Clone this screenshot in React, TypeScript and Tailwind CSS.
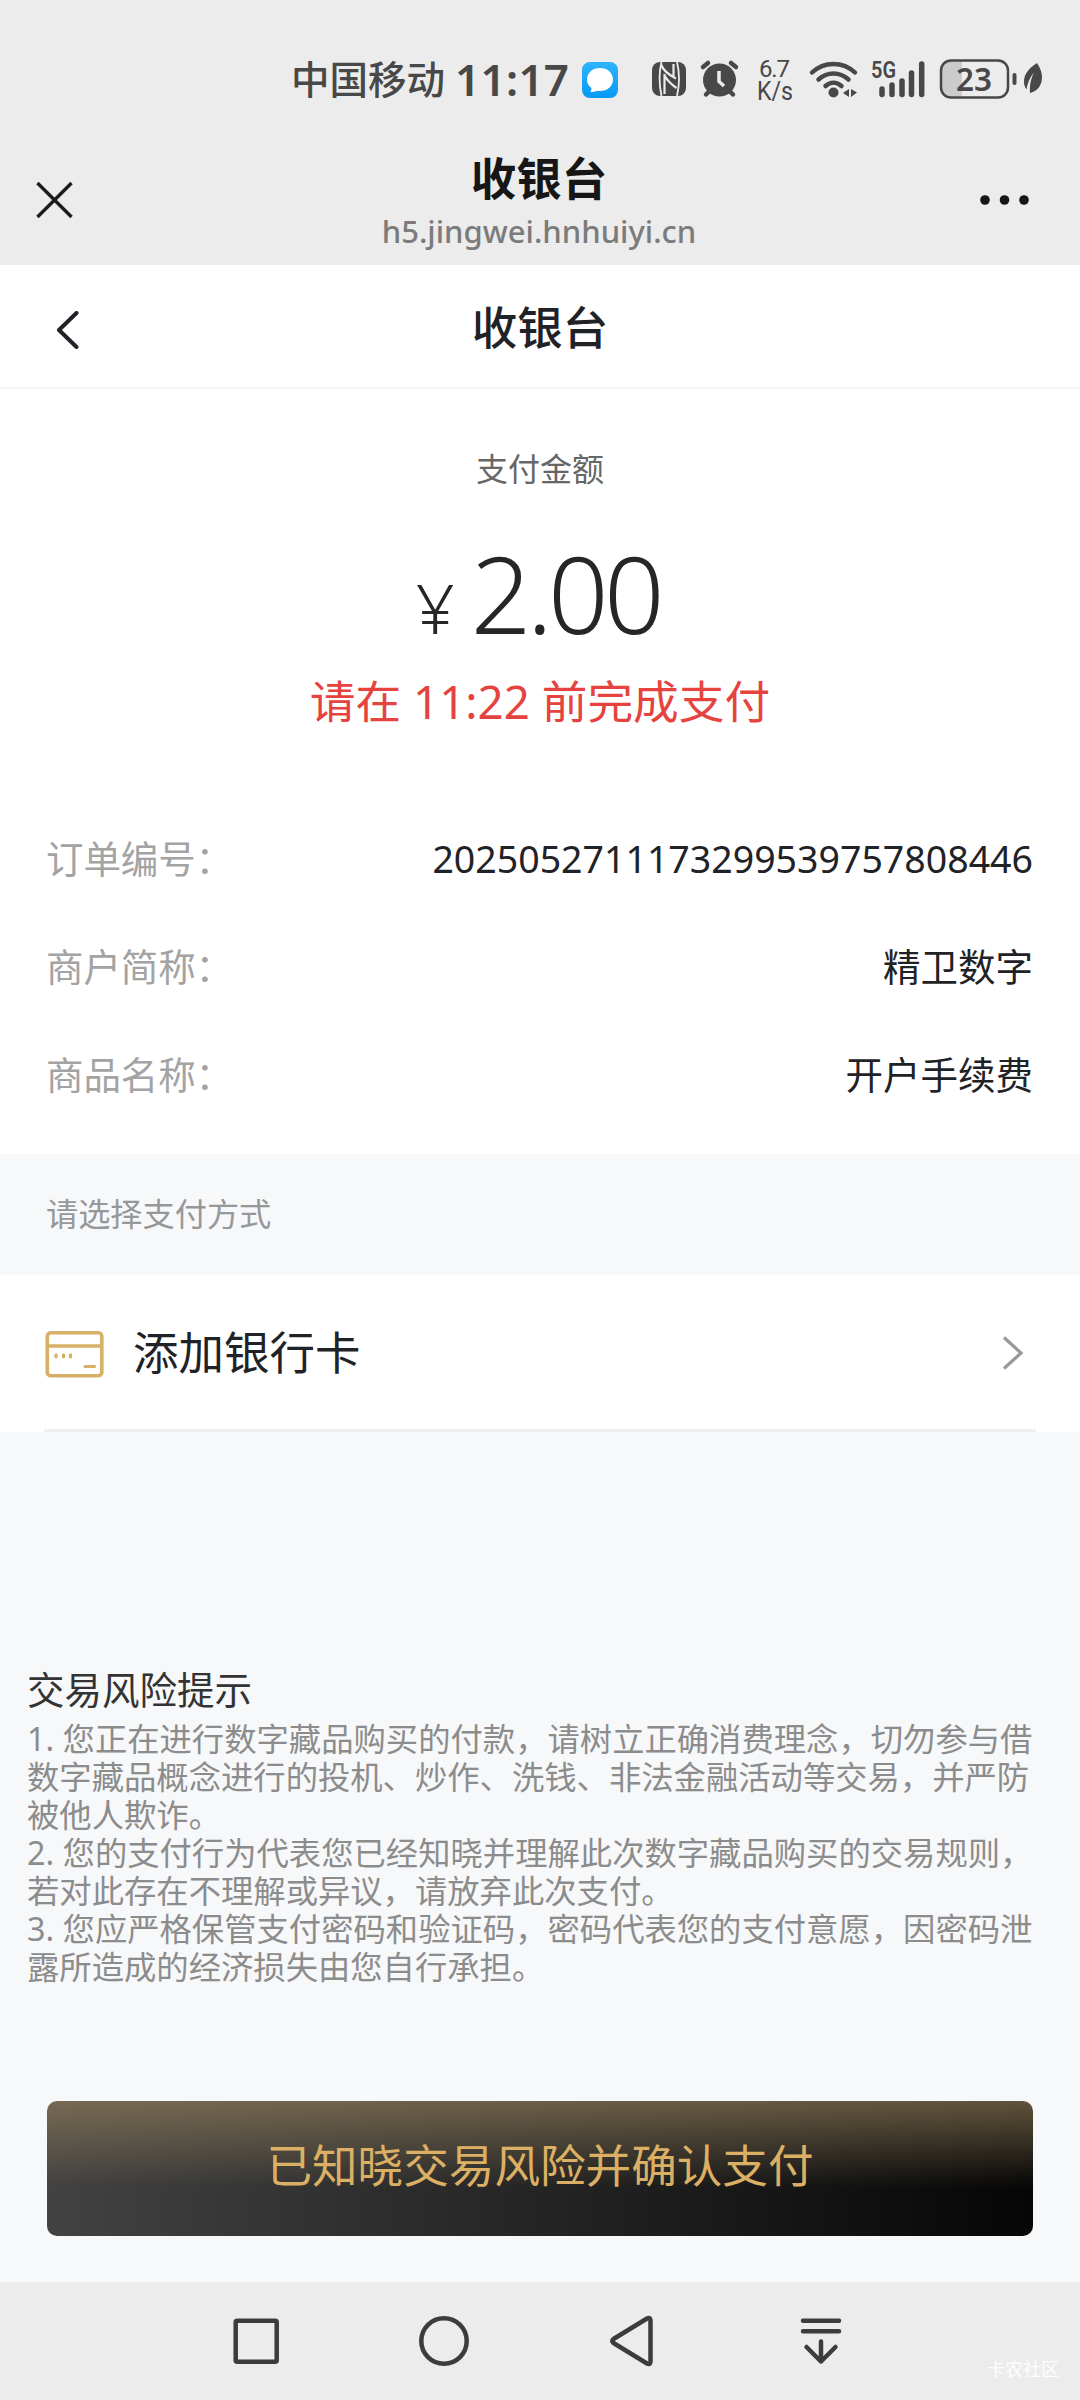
import React from 'react';

const orderRows = [
  { label: '订单编号：', value: '2025052711173299539757808446' },
  { label: '商户简称：', value: '精卫数字' },
  { label: '商品名称：', value: '开户手续费' },
];

const riskLines = [
  '1. 您正在进行数字藏品购买的付款，请树立正确消费理念，切勿参与借',
  '数字藏品概念进行的投机、炒作、洗钱、非法金融活动等交易，并严防',
  '被他人欺诈。',
  '2. 您的支付行为代表您已经知晓并理解此次数字藏品购买的交易规则，',
  '若对此存在不理解或异议，请放弃此次支付。',
  '3. 您应严格保管支付密码和验证码，密码代表您的支付意愿，因密码泄',
  '露所造成的经济损失由您自行承担。',
];

const StatusBar = () => (
  <div className="flex h-[158px] items-start pl-[291px] pt-[57px] text-[#484848]">
    <span className="h-11 w-[164px] whitespace-nowrap text-[38.500px] font-medium leading-[44px]">中国移动</span>
    <span className="h-11 w-[126px] whitespace-nowrap text-[44px] font-semibold leading-[45px] tracking-[0.3px]">11:17</span>
    {/* status icons, drawn on the same pixel grid as the bar */}
    <svg className="-mt-[17px]" width="499" height="80" viewBox="581 40 499 80" fill="none">
      <defs>
        <linearGradient id="msg" x1="0" y1="0" x2="0" y2="1">
          <stop offset="0" stopColor="#2fb4fb" />
          <stop offset="1" stopColor="#0799f5" />
        </linearGradient>
      </defs>
      <rect x="582" y="62" width="36" height="36" rx="8" fill="url(#msg)" />
      <path d="M600 68c7.500 0 13 4.800 13 11.500S607.500 91 600 91c-1 0-2-.1-3-.3-1 .7-3 1.200-6.800 1.300 1-1 1.300-2.300 1.200-4C588.600 86 587 83 587 79.500 587 72.800 592.500 68 600 68z" fill="#fff" />
      {/* nfc */}
      <rect x="652" y="62" width="34" height="34" rx="8" fill="#484848" />
      <path d="M661.500 62c-2.500 10-2.500 22 0 34M677 62c2.500 10 2.500 23 0 34" stroke="#ececec" strokeWidth="1.800" />
      <path d="M661 64.500q3 8 15 14M664.500 74v20M664.500 75.500q4 7 12 12.500M673.500 64v12" stroke="#ececec" strokeWidth="2.200" />
      {/* alarm */}
      <circle cx="719.500" cy="80" r="16.500" fill="#484848" />
      <path d="M703 67l5-4M736 67l-5-4M706 94.500l4-4M733 94.500l-4-4" stroke="#484848" strokeWidth="4.500" strokeLinecap="round" />
      <path d="M719 71v10.500l5 4.500" stroke="#ececec" strokeWidth="3.500" />
      <text x="774.500" y="77" textAnchor="middle" textLength="31" fontSize="24" fontFamily="Roboto" fill="#484848">6.7</text>
      <text x="775" y="100" textAnchor="middle" textLength="36" lengthAdjust="spacingAndGlyphs" fontSize="25" fontFamily="Roboto" fill="#484848">K/s</text>
      {/* wifi */}
      <path d="M812 72.500c12-11.500 31-11.500 43 0M818.500 79.500c9-8 21-8 30 0M825.500 86c5-4.500 11-4.500 16 0" stroke="#484848" strokeWidth="4.500" strokeLinecap="round" />
      <circle cx="833.500" cy="92.500" r="5" fill="#484848" />
      <path d="M849 89v8l-6-4zM851 89v8l6-4.500z" fill="#484848" />
      <text x="871" y="77.500" textLength="25" lengthAdjust="spacingAndGlyphs" fontSize="23" fontWeight="600" fontFamily="Roboto" fill="#484848">5G</text>
      <path d="M882 89v5.500M892 85v9.500M902 81v13.500M911.500 73v21.500M921.700 64v30.500" stroke="#484848" strokeWidth="5.500" strokeLinecap="round" />
      {/* battery */}
      <path d="M962 61h-11a10 10 0 0 0-10 10v16a10 10 0 0 0 10 10h11z" fill="#cbcbcb" />
      <rect x="941" y="60.500" width="67" height="37" rx="10" stroke="#484848" strokeWidth="2.500" />
      <text x="974" y="91" textAnchor="middle" textLength="36" lengthAdjust="spacingAndGlyphs" fontSize="33" fontWeight="600" fontFamily="Noto Sans" fill="#484848">23</text>
      <path d="M1014.500 75v8" stroke="#484848" strokeWidth="4" strokeLinecap="round" />
      <path d="M1037 63c-8 5-13 11-13 19 0 3 1 5 2.500 7.500 1-6 3-12 7.500-17-3 6-4.500 12-4 20.500 8-2 12-8 12-16 0-5-2-9-5-14z" fill="#484848" />
    </svg>
  </div>
);

const BrowserHeader = () => (
  <div className="flex h-[107px] items-start justify-between pl-9 pr-[50px]">
    <div className="w-[50px]">
      <svg className="mt-[23px]" width="37" height="38" viewBox="0 0 38 38" stroke="#1b1b1b" strokeWidth="3.500">
        <path d="M1.500 1.500l35 35M36.500 1.500l-35 35" />
      </svg>
    </div>
    <div className="ml-[12px] flex w-80 flex-col items-center">
      <h1 className="-mt-[3px] text-[45.5px] font-semibold leading-[46px] text-[#161616]">收银台</h1>
      <p className="mt-[12px] whitespace-nowrap text-[31px] font-medium leading-[36px] text-[#7b7b7b]">h5.jingwei.hnhuiyi.cn</p>
    </div>
    <svg className="mt-[37px]" width="50" height="10" viewBox="0 0 50 10" fill="#161616">
      <circle cx="5" cy="5" r="4.800" />
      <circle cx="24.500" cy="5" r="4.800" />
      <circle cx="44" cy="5" r="4.800" />
    </svg>
  </div>
);

const PageHeader = () => (
  <div className="flex h-[124px] items-center border-b-2 border-[#f5f5f5] bg-white">
    <svg className="ml-[56px] mt-[7px]" width="24" height="38" viewBox="0 0 24 38" fill="none" stroke="#1f2226" strokeWidth="4" strokeLinecap="round" strokeLinejoin="round">
      <path d="M20.500 2L3 19l17.500 17" />
    </svg>
    <h2 className="mr-20 mt-[2px] flex-1 text-center text-[45.5px] font-medium leading-[60px] text-[#1f2226]">收银台</h2>
  </div>
);

const Amount = () => (
  <div className="flex h-[413px] flex-col items-center">
    <p className="mt-[56px] text-[32px] leading-[48px] text-[#666]">支付金额</p>
    <div className="mr-1 mt-[42px] flex h-[116px] items-baseline text-[#262626]">
      <span className="mr-[16px] text-[68px] font-light leading-[116px]">¥</span>
      <span className="text-[106px] font-light leading-[116px] tracking-[-4.5px]">2.00</span>
    </div>
    <p className="mt-[20px] whitespace-nowrap text-[45.7px] leading-[60px] text-[#e64340]">请在 11:22 前完成支付</p>
  </div>
);

const OrderInfo = () => (
  <div className="flex h-[352px] flex-col px-[47px] pt-[3px]">
    {orderRows.map((row) => (
      <div key={row.label} className="flex h-[108px] items-center justify-between text-[37.5px]">
        <span className="-ml-px tracking-[-0.1px] text-[#a3a3a3]">{row.label}</span>
        <span className="text-[#1f2226]">{row.value}</span>
      </div>
    ))}
  </div>
);

const AddCard = () => (
  <div className="flex h-[157px] items-center bg-white pl-[45px] pr-[56px]">
    <svg width="60" height="48" viewBox="0 0 60 48" fill="none" stroke="#d6b066" strokeWidth="3.600">
      <rect x="2.300" y="2.800" width="54.500" height="43" rx="3.500" />
      <path d="M2 16h55" />
      <path d="M11 24.800v2M18.500 24.800v2M25.500 24.800v2M40 36.500h9.500" strokeLinecap="round" strokeWidth="3.200" />
    </svg>
    <span className="-mt-[3px] ml-7 text-[45.500px] text-[#1f2226]">添加银行卡</span>
    <svg className="-mt-[2px] ml-auto" width="22" height="34" viewBox="0 0 22 34" fill="none" stroke="#999" strokeWidth="3.200">
      <path d="M2 1.500L19 17 2 32.500" />
    </svg>
  </div>
);

const NavBar = () => (
  <div className="flex h-[118px] items-center bg-[#ececec] pl-[230px] pr-[21px]">
    <svg width="620" height="60" viewBox="230 2311 620 60" fill="none" stroke="#3c3c3c" strokeWidth="4.500" strokeLinecap="round" strokeLinejoin="round">
      <rect x="235.700" y="2320.700" width="41" height="41" rx="1.500" />
      <circle cx="444" cy="2341" r="22.700" />
      <path d="M650.500 2320v42q-.5 3-3.500 1.500L613.500 2343q-2.500-2 0-4l33.500-20.500q3-1.500 3.500 1.500z" />
      <path d="M803 2320.700h36M803 2331.300h36M821 2341.500v20M806.500 2347l14.500 14.500 14.500-14.500" />
    </svg>
    <span className="ml-auto mt-14 whitespace-nowrap text-[18px] leading-6 text-white/90">卡农社区</span>
  </div>
);

export default function App() {
  return (
    <div className="flex h-[2400px] w-[1080px] flex-col overflow-hidden bg-[#f7f8fa] font-['Noto_Sans','Noto_Sans_CJK_SC',sans-serif]">
      <div className="bg-[#ececec]">
        <StatusBar />
        <BrowserHeader />
      </div>
      <PageHeader />
      <div className="bg-white">
        <Amount />
        <OrderInfo />
      </div>
      <div className="flex h-[121px] items-center px-[46px] pb-px text-[32.2px] text-[#969799]">请选择支付方式</div>
      <AddCard />
      <div className="mx-11 -mt-[3px] h-[3px] shrink-0 bg-[#eef1f4]" />
      <div className="flex h-[850px] flex-col">
        <h3 className="ml-[27px] mt-[234px] text-[37.5px] leading-[48px] text-[#333]">交易风险提示</h3>
        <div className="ml-[27px] mt-[5px] text-[32.35px] leading-[38px] text-[#8c8c8c]">
          {riskLines.map((line) => (
            <p key={line} className="whitespace-nowrap">{line}</p>
          ))}
        </div>
        <button className="mx-[47px] mb-[46px] mt-auto h-[135px] rounded-[10px] bg-[linear-gradient(180deg,rgba(150,130,92,0.62)_0%,rgba(145,122,80,0)_64%),linear-gradient(90deg,#424242,#060606)] pb-[6px] text-[45.6px] text-[#dcb064]">
          已知晓交易风险并确认支付
        </button>
      </div>
      <NavBar />
    </div>
  );
}
